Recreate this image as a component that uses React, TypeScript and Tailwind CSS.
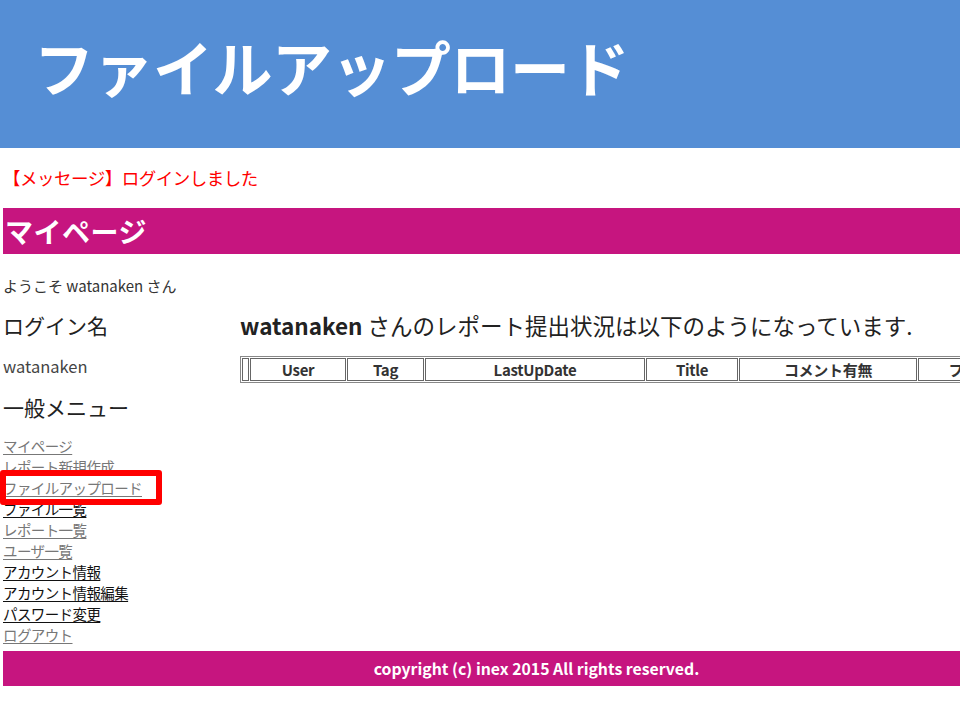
const jp = '[font-family:"Noto_Sans_CJK_JP","Noto_Sans",sans-serif]';

const menu: { label: string; dark?: boolean }[] = [
  { label: 'マイページ' },
  { label: 'レポート新規作成' },
  { label: 'ファイルアップロード' },
  { label: 'ファイル一覧', dark: true },
  { label: 'レポート一覧' },
  { label: 'ユーザ一覧' },
  { label: 'アカウント情報', dark: true },
  { label: 'アカウント情報編集', dark: true },
  { label: 'パスワード変更', dark: true },
  { label: 'ログアウト' },
];

const columns: { label: string; width: string }[] = [
  { label: '', width: 'w-[7px]' },
  { label: 'User', width: 'w-[96px]' },
  { label: 'Tag', width: 'w-[77px]' },
  { label: 'LastUpDate', width: 'w-[220px]' },
  { label: 'Title', width: 'w-[92px]' },
  { label: 'コメント有無', width: 'w-[178px]' },
  { label: 'ファイル', width: 'w-[120px]' },
];

export default function App() {
  return (
    <div className={`relative w-[960px] h-[720px] overflow-hidden bg-white ${jp}`}>
      <div className="h-[148px] bg-[#558ed5] pl-[34px] pt-[32px]">
        <h1 className="text-[60px] leading-[68px] font-bold text-white tracking-[-0.5px]">
          ファイルアップロード
        </h1>
      </div>

      <div className="w-[1070px] pl-[3px]">
        <div className="pt-[18px] h-[60px] text-[17.5px] leading-[24px] text-[#ff0000] tracking-[-0.5px]">
          【メッセージ】ログインしました
        </div>

        <div className="h-[46px] bg-[#c6157f] pl-[2px] flex items-center">
          <h2 className="text-[28px] font-bold text-white leading-none tracking-[0.5px]">マイページ</h2>
        </div>

        <div className="pt-[22px] text-[15px] leading-[20px] text-[#333]">
          ようこそ watanaken さん
        </div>

        <div className="flex">
          <div className="w-[237px]">
            <div className="pt-[14px] text-[21px] leading-[30px] text-[#222]">ログイン名</div>
            <div className="pt-[16px] text-[16.5px] leading-[20px] text-[#444]">watanaken</div>
            <div className="pt-[16px] text-[21px] leading-[30px] text-[#222]">一般メニュー</div>
            <ul className="pt-[13px] flex flex-col">
              {menu.map((m) => (
                <li key={m.label} className="h-[21px] text-[14.5px] leading-[21px] tracking-[-0.6px]">
                  <a
                    href="#"
                    className={`underline underline-offset-2 ${m.dark ? 'text-[#111]' : 'text-[#777]'}`}
                  >
                    {m.label}
                  </a>
                </li>
              ))}
            </ul>
          </div>

          <div className="flex-1">
            <div className="pt-[14px] text-[22.5px] leading-[30px] text-[#222]">
              <span className="font-bold">watanaken</span> さんのレポート提出状況は以下のようになっています.
            </div>
            <table className="mt-[16px] border border-[#888] [border-spacing:1px] border-separate">
              <thead>
                <tr>
                  {columns.map((c, i) => (
                    <th
                      key={i}
                      className={`${c.width} h-[23px] border border-[#666] p-0 text-[15px] leading-[18px] font-bold text-[#333] text-center tracking-[-0.3px]`}
                    >
                      {c.label}
                    </th>
                  ))}
                </tr>
              </thead>
            </table>
          </div>
        </div>

        <div className="mt-[6px] h-[35px] bg-[#c6157f] flex items-center justify-center">
          <span className="text-[15.8px] font-bold text-white">
            copyright (c) inex 2015 All rights reserved.
          </span>
        </div>
      </div>

      <div className="absolute left-0 top-[470px] w-[162px] h-[35px] border-[6px] border-[#ff0000] rounded-[3px]" />
    </div>
  );
}
